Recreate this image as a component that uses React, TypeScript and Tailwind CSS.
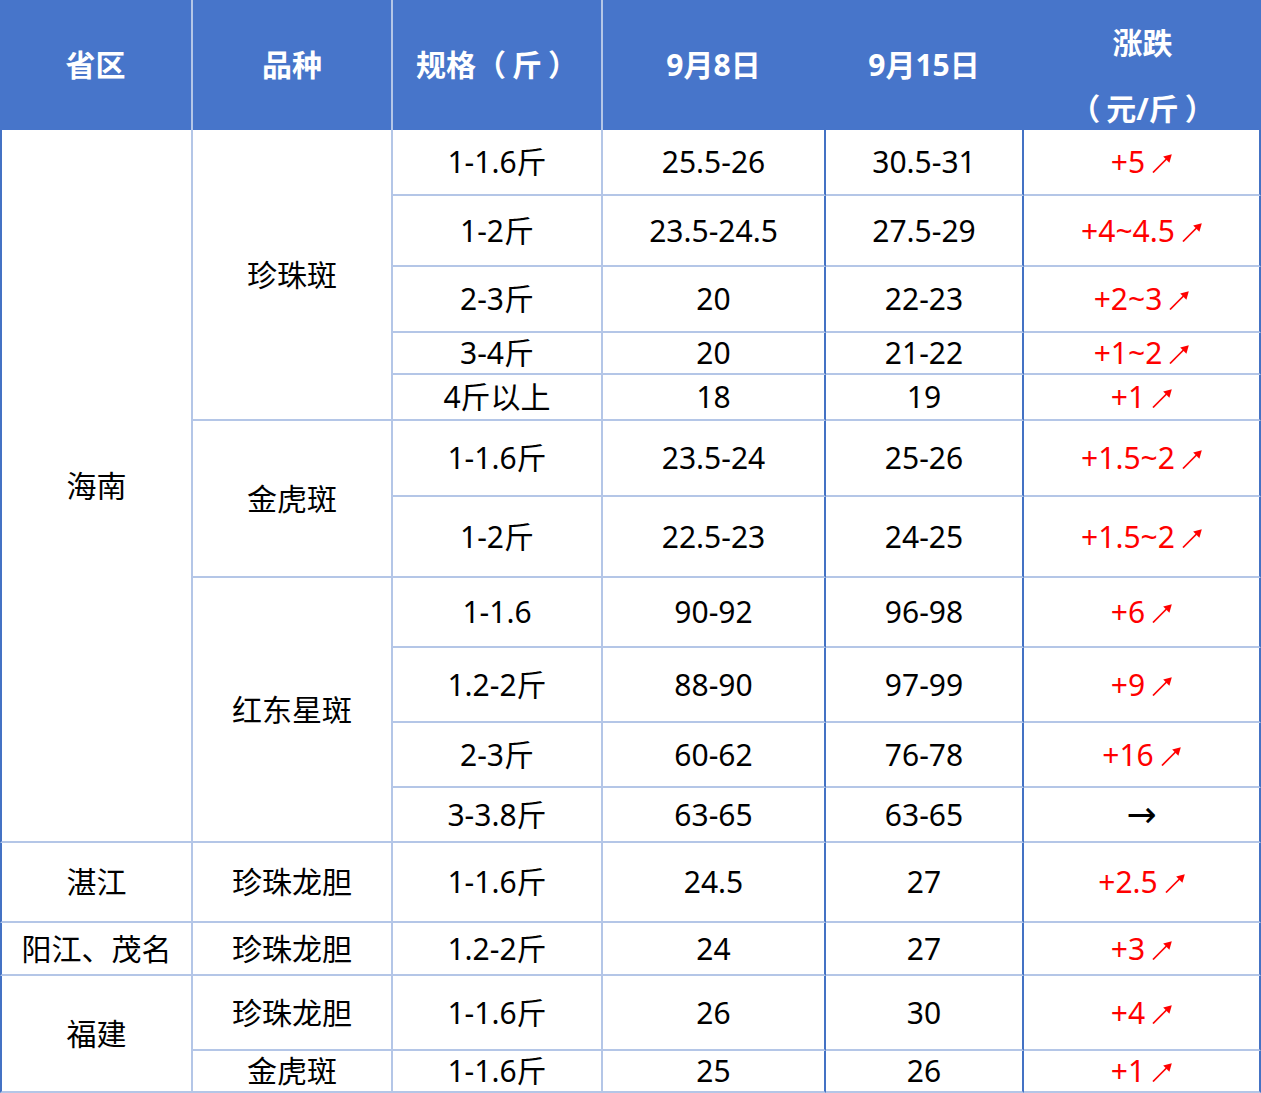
import React from 'react';

type Row = {
  province?: { name: string; span: number };
  variety?: { name: string; span: number };
  spec: string;
  d1: string;
  d2: string;
  change: string | null; // null = flat
};

const rows: Row[] = [
  { province: { name: '海南', span: 11 }, variety: { name: '珍珠斑', span: 5 }, spec: '1-1.6斤', d1: '25.5-26', d2: '30.5-31', change: '+5' },
  { spec: '1-2斤', d1: '23.5-24.5', d2: '27.5-29', change: '+4~4.5' },
  { spec: '2-3斤', d1: '20', d2: '22-23', change: '+2~3' },
  { spec: '3-4斤', d1: '20', d2: '21-22', change: '+1~2' },
  { spec: '4斤以上', d1: '18', d2: '19', change: '+1' },
  { variety: { name: '金虎斑', span: 2 }, spec: '1-1.6斤', d1: '23.5-24', d2: '25-26', change: '+1.5~2' },
  { spec: '1-2斤', d1: '22.5-23', d2: '24-25', change: '+1.5~2' },
  { variety: { name: '红东星斑', span: 4 }, spec: '1-1.6', d1: '90-92', d2: '96-98', change: '+6' },
  { spec: '1.2-2斤', d1: '88-90', d2: '97-99', change: '+9' },
  { spec: '2-3斤', d1: '60-62', d2: '76-78', change: '+16' },
  { spec: '3-3.8斤', d1: '63-65', d2: '63-65', change: null },
  { province: { name: '湛江', span: 1 }, variety: { name: '珍珠龙胆', span: 1 }, spec: '1-1.6斤', d1: '24.5', d2: '27', change: '+2.5' },
  { province: { name: '阳江、茂名', span: 1 }, variety: { name: '珍珠龙胆', span: 1 }, spec: '1.2-2斤', d1: '24', d2: '27', change: '+3' },
  { province: { name: '福建', span: 2 }, variety: { name: '珍珠龙胆', span: 1 }, spec: '1-1.6斤', d1: '26', d2: '30', change: '+4' },
  { variety: { name: '金虎斑', span: 1 }, spec: '1-1.6斤', d1: '25', d2: '26', change: '+1' },
];

const spanClass: Record<number, string> = {
  1: 'row-span-1',
  2: 'row-span-2',
  4: 'row-span-4',
  5: 'row-span-5',
  11: 'row-span-11',
};

const cell = 'flex items-center justify-center leading-none border-b-2 border-b-[#b4c6e7] border-r-2';
const head = 'flex items-center justify-center leading-none font-bold text-white bg-[#4775ca] border-r-2';

const UpArrow = () => (
  <svg className="inline-block ml-[7px] align-baseline" width="20" height="19" viewBox="0 0 20 19">
    <path d="M1 18.5 L16 3.5" stroke="#ff0000" strokeWidth="1.7" fill="none" />
    <path d="M19.8 0.2 L11.2 2.6 L17.4 8.8 Z" fill="#ff0000" />
  </svg>
);

const App = () => {
  return (
    <div
      className="w-[1261px] h-[1093px] overflow-hidden bg-white text-[30px] text-black"
      style={{ fontFamily: '"Noto Sans", "Noto Sans CJK SC", sans-serif' }}
    >
      <div className="grid grid-cols-[193px_200px_210px_223px_198px_237px] grid-rows-[130px_66px_71px_66px_42px_46px_76px_81px_70px_75px_65px_55px_80px_53px_75px_42px]">
        {/* Header */}
        <div className={`${head} border-r-[#b4c6e7]`}>省区</div>
        <div className={`${head} border-r-[#b4c6e7]`}>品种</div>
        <div className={`${head} border-r-[#b4c6e7]`}>
          规格（<span className="mx-[6px]">斤</span>）
        </div>
        <div className={`${head} border-r-[#4775ca]`}>9月8日</div>
        <div className={`${head} border-r-[#4775ca]`}>9月15日</div>
        <div className="font-bold text-white bg-[#4775ca] text-center leading-[66px] pt-[10px]">
          <div>涨跌</div>
          <div>
            （<span className="mx-[6px]">元/斤</span>）
          </div>
        </div>

        {/* Body */}
        {rows.map((r, i) => (
          <React.Fragment key={i}>
            {r.province && (
              <div className={`${cell} ${spanClass[r.province.span]} border-l-2 border-l-[#4472c4] border-r-[#b4c6e7]`}>
                {r.province.name}
              </div>
            )}
            {r.variety && (
              <div className={`${cell} ${spanClass[r.variety.span]} border-r-[#b4c6e7]`}>{r.variety.name}</div>
            )}
            <div className={`${cell} border-r-[#b4c6e7]`}>{r.spec}</div>
            <div className={`${cell} border-r-[#4472c4]`}>{r.d1}</div>
            <div className={`${cell} border-r-[#4472c4]`}>{r.d2}</div>
            <div className={`${cell} border-r-[#4472c4]`}>
              {r.change ? (
                <span className="text-[#ff0000]">
                  {r.change}
                  <UpArrow />
                </span>
              ) : (
                <span className="text-[36px]" style={{ fontFamily: '"DejaVu Sans", sans-serif' }}>→</span>
              )}
            </div>
          </React.Fragment>
        ))}
      </div>
    </div>
  );
};

export default App;
